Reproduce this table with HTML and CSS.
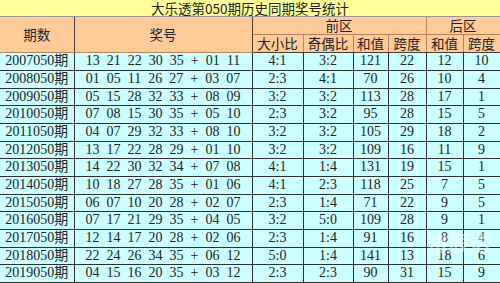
FILE: index.html
```html
<!DOCTYPE html>
<html lang="zh-CN">
<head>
<meta charset="utf-8">
<title>大乐透第050期历史同期奖号统计</title>
<link rel="stylesheet" href="styles.css">
</head>
<body>
<div class="wrap">
<table class="stats">
  <colgroup>
    <col class="c-issue"><col class="c-nums"><col class="c-a"><col class="c-b"><col class="c-c"><col class="c-d"><col class="c-e"><col class="c-f">
  </colgroup>
  <thead>
    <tr class="title-row"><th colspan="8" class="title">大乐透第050期历史同期奖号统计</th></tr>
    <tr class="head1">
      <th rowspan="2" class="main">期数</th>
      <th rowspan="2" class="main">奖号</th>
      <th colspan="4" class="zone">前区</th>
      <th colspan="2" class="zone last">后区</th>
    </tr>
    <tr class="head2">
      <th>大小比</th><th>奇偶比</th><th>和值</th><th class="sep">跨度</th><th>和值</th><th class="last">跨度</th>
    </tr>
  </thead>
  <tbody>
    <tr><td>2007050期</td><td class="nums">13 21 22 30 35 + 01 11</td><td>4:1</td><td>3:2</td><td>121</td><td>22</td><td>12</td><td>10</td></tr>
    <tr><td>2008050期</td><td class="nums">01 05 11 26 27 + 03 07</td><td>2:3</td><td>4:1</td><td>70</td><td>26</td><td>10</td><td>4</td></tr>
    <tr><td>2009050期</td><td class="nums">05 15 28 32 33 + 08 09</td><td>3:2</td><td>3:2</td><td>113</td><td>28</td><td>17</td><td>1</td></tr>
    <tr><td>2010050期</td><td class="nums">07 08 15 30 35 + 05 10</td><td>2:3</td><td>3:2</td><td>95</td><td>28</td><td>15</td><td>5</td></tr>
    <tr><td>2011050期</td><td class="nums">04 07 29 32 33 + 08 10</td><td>3:2</td><td>3:2</td><td>105</td><td>29</td><td>18</td><td>2</td></tr>
    <tr><td>2012050期</td><td class="nums">13 17 22 28 29 + 01 10</td><td>3:2</td><td>3:2</td><td>109</td><td>16</td><td>11</td><td>9</td></tr>
    <tr><td>2013050期</td><td class="nums">14 22 30 32 34 + 07 08</td><td>4:1</td><td>1:4</td><td>131</td><td>19</td><td>15</td><td>1</td></tr>
    <tr><td>2014050期</td><td class="nums">10 18 27 28 35 + 01 06</td><td>4:1</td><td>2:3</td><td>118</td><td>25</td><td>7</td><td>5</td></tr>
    <tr><td>2015050期</td><td class="nums">06 07 10 20 28 + 02 07</td><td>2:3</td><td>1:4</td><td>71</td><td>22</td><td>9</td><td>5</td></tr>
    <tr><td>2016050期</td><td class="nums">07 17 21 29 35 + 04 05</td><td>3:2</td><td>5:0</td><td>109</td><td>28</td><td>9</td><td>1</td></tr>
    <tr><td>2017050期</td><td class="nums">12 14 17 20 28 + 02 06</td><td>2:3</td><td>1:4</td><td>91</td><td>16</td><td>8</td><td>4</td></tr>
    <tr><td>2018050期</td><td class="nums">22 24 26 34 35 + 06 12</td><td>5:0</td><td>1:4</td><td>141</td><td>13</td><td>18</td><td>6</td></tr>
    <tr><td>2019050期</td><td class="nums">04 15 16 20 35 + 03 12</td><td>2:3</td><td>2:3</td><td>90</td><td>31</td><td>15</td><td>9</td></tr>
  </tbody>
</table>
<div class="watermark">裕辰达</div>
</div>
</body>
</html>
```

FILE: styles.css
```css
html, body {
  margin: 0;
  padding: 0;
  background: #ffffff;
}

.wrap {
  position: relative;
  width: 500px;
  height: 283px;
  overflow: hidden;
}

.stats {
  width: 500px;
  table-layout: fixed;
  border-collapse: collapse;
  font-family: "Liberation Serif", "Noto Sans CJK SC", serif;
  font-size: 14px;
  color: #222222;
}

.c-issue { width: 74px; }
.c-nums { width: 178px; }
.c-a { width: 51px; }
.c-b { width: 50px; }
.c-c { width: 35px; }
.c-d { width: 38px; }
.c-e { width: 37px; }
.c-f { width: 37px; }

.stats th,
.stats td {
  padding: 0;
  text-align: center;
  vertical-align: middle;
  white-space: nowrap;
  line-height: 12px;
  font-weight: normal;
}

.title-row { height: 16px; }
.title {
  background: #ffff99;
  border-bottom: 1px solid #9a9a9a;
  font-family: "Noto Sans CJK SC", sans-serif;
  font-size: 13.5px;
  line-height: 14px;
  padding-top: 1px;
}

.head1 { height: 18px; }
.head2 { height: 18px; }

.head1 th,
.head2 th {
  background: #ffcc99;
  font-family: "Noto Sans CJK SC", sans-serif;
  font-size: 13.5px;
  border: 1px solid #b9835a;
}

.head1 th.main {
  border-right: 1px solid #4a3a30;
  border-left: none;
}
.head1 th.zone.last,
.head2 th.last {
  border-right: 1px solid #4a3a30;
}
.head2 th { border-bottom: 1px solid #4a3a30; }

.stats tbody tr { height: 18px; }
.stats tbody tr:nth-child(3n) { height: 17px; }

.stats td {
  background: #ccffff;
  border: 1px solid #2f2f2f;
}
.stats td:first-child { border-left: none; }

.nums {
  word-spacing: 3.5px;
}

.watermark {
  position: absolute;
  left: 427px;
  top: 229px;
  font-family: "Noto Sans CJK SC", sans-serif;
  font-size: 21px;
  font-weight: bold;
  line-height: 26px;
  color: rgba(255, 255, 255, 0.5);
  pointer-events: none;
}
```
